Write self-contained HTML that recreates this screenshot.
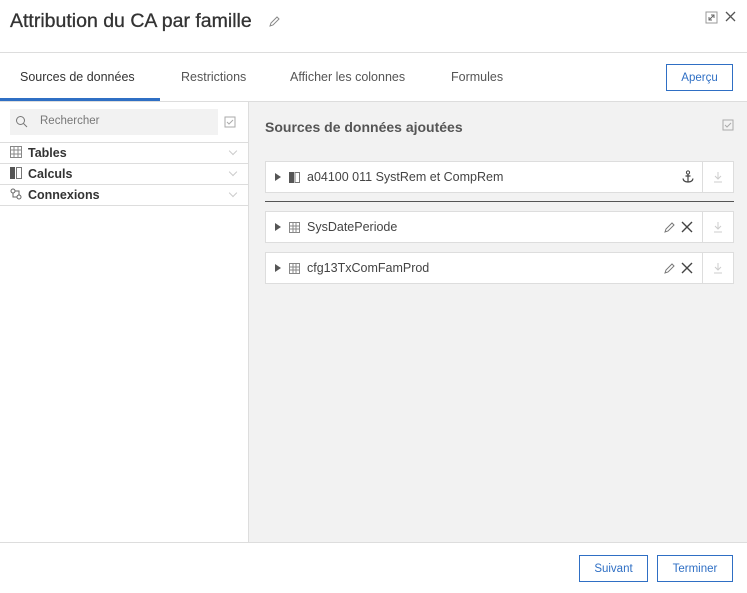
<!DOCTYPE html>
<html><head><style>
*{box-sizing:border-box;margin:0;padding:0}
body{width:747px;height:593px;background:#fff;font-family:"Liberation Sans",sans-serif;position:relative;overflow:hidden;color:#333}
.a{position:absolute}
.tab{position:absolute;top:70px;font-size:12.5px;color:#555}
.btn{position:absolute;border:1px solid #2f6fc4;color:#2f6fc4;font-size:11.5px;background:#fff;display:flex;align-items:center;justify-content:center}
.row{position:absolute;left:265px;width:469px;height:32px;background:#fff;border:1px solid #ddd}
.row .t{position:absolute;left:41px;top:8px;font-size:12.5px;color:#444}
.row .tri{position:absolute;left:9px;top:11px;width:0;height:0;border-left:6px solid #555;border-top:4px solid transparent;border-bottom:4px solid transparent}
.row .dl{position:absolute;right:0;top:0;width:31px;height:30px;border-left:1px solid #ddd}
.li{position:absolute;left:0;width:248px;height:21px;border-bottom:1px solid #ddd;font-size:12.5px;font-weight:bold;color:#333}
.li span{position:absolute;left:28px;top:3px}
.chev{position:absolute;right:12px;top:5px;width:6px;height:6px;border-right:1px solid #ccc;border-bottom:1px solid #ccc;transform:rotate(45deg)}
</style></head><body>
<div class="a" style="left:10px;top:10px;font-size:19.5px;color:#333;-webkit-text-stroke:0.3px #333">Attribution du CA par famille</div>
<svg class="a" style="left:268px;top:15px" width="13" height="13" viewBox="0 0 13 13"><path d="M2 11 L3 8 L9 2 L11 4 L5 10 Z" fill="none" stroke="#888" stroke-width="1"/></svg>
<svg class="a" style="left:705px;top:11px" width="13" height="13" viewBox="0 0 13 13"><rect x="1" y="1" width="11" height="11" fill="none" stroke="#999"/><path d="M4 9 L9 4 M6 4 H9 V7 M4 6 V9 H7" stroke="#666" fill="none"/></svg>
<svg class="a" style="left:724px;top:10px" width="13" height="13" viewBox="0 0 13 13"><path d="M2 2 L11 11 M11 2 L2 11" stroke="#555" stroke-width="1.3"/></svg>
<div class="a" style="left:0;top:52px;width:747px;height:1px;background:#ddd"></div>
<div class="tab" style="left:20px;color:#333">Sources de données</div>
<div class="tab" style="left:181px">Restrictions</div>
<div class="tab" style="left:290px">Afficher les colonnes</div>
<div class="tab" style="left:451px">Formules</div>
<div class="btn" style="left:666px;top:64px;width:67px;height:27px">Aperçu</div>
<div class="a" style="left:0;top:101px;width:747px;height:1px;background:#ddd"></div>
<div class="a" style="left:0;top:98px;width:160px;height:3px;background:#2f6fc4"></div>
<div class="a" style="left:248px;top:102px;width:499px;height:440px;background:#f2f2f2;border-left:1px solid #ddd"></div>
<div class="a" style="left:10px;top:109px;width:208px;height:26px;background:#f2f2f2"></div>
<svg class="a" style="left:15px;top:115px" width="14" height="14" viewBox="0 0 14 14"><circle cx="5.5" cy="5.5" r="4" fill="none" stroke="#777"/><path d="M8.5 8.5 L12 12" stroke="#777"/></svg>
<div class="a" style="left:40px;top:115px;font-size:11.5px;color:#777">Rechercher</div>
<svg class="a" style="left:224px;top:116px" width="12" height="12"><rect x="1" y="1" width="10" height="10" fill="none" stroke="#aaa"/><path d="M3 6 L5 8 L9 4" stroke="#aaa" fill="none"/></svg>
<div class="a" style="left:0;top:142px;width:248px;height:1px;background:#ddd"></div>
<div class="li" style="top:143px"><svg class="a" style="left:10px;top:3px" width="12" height="12"><path d="M.5 .5H11.5V11.5H.5Z M4 .5V11.5 M8 .5V11.5 M.5 4H11.5 M.5 8H11.5" stroke="#888" fill="none"/></svg><span>Tables</span><i class="chev"></i></div>
<div class="li" style="top:164px"><svg class="a" style="left:10px;top:3px" width="12" height="12"><rect x="0" y="0" width="5" height="12" fill="#555"/><rect x="6.5" y=".5" width="5" height="11" fill="none" stroke="#777"/></svg><span>Calculs</span><i class="chev"></i></div>
<div class="li" style="top:185px"><svg class="a" style="left:10px;top:3px" width="12" height="12"><circle cx="3" cy="3" r="2" fill="none" stroke="#666"/><circle cx="9" cy="9" r="2" fill="none" stroke="#666"/><path d="M5 3H9V7 M3 5V9H7" stroke="#666" fill="none"/></svg><span>Connexions</span><i class="chev"></i></div>
<div class="a" style="left:265px;top:119px;font-size:14px;font-weight:bold;color:#555">Sources de données ajoutées</div>
<svg class="a" style="left:722px;top:119px" width="12" height="12"><rect x="1" y="1" width="10" height="10" fill="none" stroke="#aaa"/><path d="M3 6 L5 8 L9 4" stroke="#aaa" fill="none"/></svg>
<div class="row" style="top:161px"><i class="tri"></i><svg class="a" style="left:23px;top:10px" width="11" height="11"><rect x="0" y="0" width="5" height="11" fill="#555"/><rect x="6" y=".5" width="4.5" height="10" fill="none" stroke="#777"/></svg><div class="t">a04100 011 SystRem et CompRem</div><svg class="a" style="left:416px;top:8px" width="12" height="14" viewBox="0 0 12 14"><circle cx="6" cy="2.5" r="1.6" fill="none" stroke="#444"/><path d="M6 4V12 M3.5 6H8.5 M1 8.5 Q1.5 12 6 12 Q10.5 12 11 8.5" stroke="#444" stroke-width="1.2" fill="none"/></svg><div class="dl"><svg class="a" style="left:10px;top:9px" width="10" height="12"><path d="M5 1V8 M2 5L5 8L8 5 M1 11H9" stroke="#ccc" fill="none"/></svg></div></div>
<div class="a" style="left:265px;top:201px;width:469px;height:1px;background:#555"></div>
<div class="row" style="top:211px"><i class="tri"></i><svg class="a" style="left:23px;top:10px" width="11" height="11"><path d="M.5 .5H10.5V10.5H.5Z M4 .5V10.5 M7 .5V10.5 M.5 4H10.5 M.5 7H10.5" stroke="#888" fill="none"/></svg><div class="t">SysDatePeriode</div><svg class="a" style="left:398px;top:9px" width="12" height="12"><path d="M1 11 L2 8 L8 2 L10 4 L4 10 Z" fill="none" stroke="#777"/></svg><svg class="a" style="left:415px;top:9px" width="12" height="12"><path d="M1 1 L11 11 M11 1 L1 11" stroke="#444" stroke-width="1.4"/></svg><div class="dl"><svg class="a" style="left:10px;top:9px" width="10" height="12"><path d="M5 1V8 M2 5L5 8L8 5 M1 11H9" stroke="#ccc" fill="none"/></svg></div></div>
<div class="row" style="top:252px"><i class="tri"></i><svg class="a" style="left:23px;top:10px" width="11" height="11"><path d="M.5 .5H10.5V10.5H.5Z M4 .5V10.5 M7 .5V10.5 M.5 4H10.5 M.5 7H10.5" stroke="#888" fill="none"/></svg><div class="t">cfg13TxComFamProd</div><svg class="a" style="left:398px;top:9px" width="12" height="12"><path d="M1 11 L2 8 L8 2 L10 4 L4 10 Z" fill="none" stroke="#777"/></svg><svg class="a" style="left:415px;top:9px" width="12" height="12"><path d="M1 1 L11 11 M11 1 L1 11" stroke="#444" stroke-width="1.4"/></svg><div class="dl"><svg class="a" style="left:10px;top:9px" width="10" height="12"><path d="M5 1V8 M2 5L5 8L8 5 M1 11H9" stroke="#ccc" fill="none"/></svg></div></div>
<div class="a" style="left:0;top:542px;width:747px;height:1px;background:#ddd"></div>
<div class="btn" style="left:579px;top:555px;width:69px;height:27px">Suivant</div>
<div class="btn" style="left:657px;top:555px;width:76px;height:27px">Terminer</div>
</body></html>
